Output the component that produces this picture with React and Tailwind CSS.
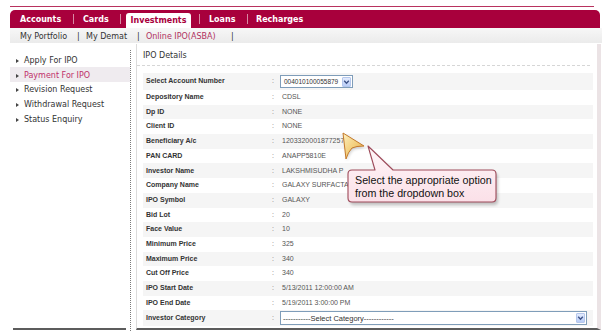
import React from "react";

const rows = [
  ["Depository Name", "CDSL"],
  ["Dp ID", "NONE"],
  ["Client ID", "NONE"],
  ["Beneficiary A/c", "1203320001877257"],
  ["PAN CARD", "ANAPP5810E"],
  ["Investor Name", "LAKSHMISUDHA P"],
  ["Company Name", "GALAXY SURFACTANTS LTD"],
  ["IPO Symbol", "GALAXY"],
  ["Bid Lot", "20"],
  ["Face Value", "10"],
  ["Minimum Price", "325"],
  ["Maximum Price", "340"],
  ["Cut Off Price", "340"],
  ["IPO Start Date", "5/13/2011 12:00:00 AM"],
  ["IPO End Date", "5/19/2011 3:00:00 PM"],
];

const side = [
  "Apply For IPO",
  "Payment For IPO",
  "Revision Request",
  "Withdrawal Request",
  "Status Enquiry",
];

function Chevron() {
  return (
    <div className="w-[9px] h-[10px] mr-px bg-gradient-to-b from-[#e3ebfd] to-[#b9cdf7] border border-[#b5c7ec] rounded-[1px] flex items-center justify-center">
      <svg width="7" height="6" viewBox="0 0 7 6">
        <path d="M1.2 1.8 L3.5 4.2 L5.8 1.8" fill="none" stroke="#3d5287" strokeWidth="1.4" />
      </svg>
    </div>
  );
}

function Label({ children }) {
  return (
    <div className="w-[129px] pl-[3px] text-[7px] font-bold text-[#333] whitespace-nowrap">{children}</div>
  );
}

function Colon() {
  return <div className="w-[10px] text-[7px] text-[#777]">:</div>;
}

export default function App() {
  return (
    <div className="w-[605px] h-[331px] relative overflow-hidden bg-white" style={{ fontFamily: "'DejaVu Sans', sans-serif" }}>
      {/* top thin line */}
      <div className="ml-[10px] mr-[11px] mt-[6px] h-px bg-[#b8325e]" />
      {/* red tab bar */}
      <div className="ml-[10px] mr-[5px] mt-[3px] h-[18px] bg-[#a8003c] rounded-t-[5px] flex items-center text-[8px] font-bold text-white whitespace-nowrap">
        <div className="w-[63px] pl-[10px] pt-[1.5px]">Accounts</div>
        <div className="w-px h-[10px] bg-[#d88aa4]" />
        <div className="w-[46px] pl-[9px] pt-[1.5px]">Cards</div>
        <div className="w-px h-[10px] bg-[#d88aa4]" />
        <div className="w-[5px]" />
        <div className="self-end w-[65px] h-[15px] bg-white rounded-t-[3px] text-[#a8003c] flex items-center justify-center">Investments</div>
        <div className="w-[8px]" />
        <div className="w-px h-[10px] bg-[#d88aa4]" />
        <div className="w-[47px] pl-[9px] pt-[1.5px]">Loans</div>
        <div className="w-px h-[10px] bg-[#d88aa4]" />
        <div className="pl-[8px] pt-[1.5px]">Recharges</div>
      </div>
      {/* sub nav */}
      <div className="ml-[10px] mr-[3px] h-[15px] pt-[2px] bg-gradient-to-b from-[#f7f7f7] to-[#ebebeb] flex items-center text-[8px] text-[#333] whitespace-nowrap">
        <div className="w-[67px] pl-[10px]">My Portfolio</div>
        <div className="w-[9px]">|</div>
        <div className="w-[51px]">My Demat</div>
        <div className="w-[9px]">|</div>
        <div className="w-[85px] text-[#b03060]">Online IPO(ASBA)</div>
        <div>|</div>
      </div>
      {/* body */}
      <div className="flex h-[288px]">
        {/* sidebar */}
        <div className="ml-[10px] w-[119px] flex flex-col">
          <div className="pt-[9.4px] flex flex-col">
            {side.map((s, i) => (
              <div
                key={s}
                className={
                  "h-[14.8px] pt-[2px] flex items-center pl-[6px] text-[8px] whitespace-nowrap " +
                  (i === 1 ? "bg-[#efebef] text-[#c0306a] mr-[-1px]" : "text-[#333]")
                }
              >
                <div className="w-[8px] flex items-center">
                  <div className="w-0 h-0 border-y-[2px] border-y-transparent border-l-[3px] border-l-[#444]" />
                </div>
                {s}
              </div>
            ))}
          </div>
          <div className="mt-auto mx-[3px] mb-[1.5px] h-[2px] bg-[#5c5c5c]" />
        </div>
        {/* dotted divider */}
        <div className="mt-[7px] ml-[1px] w-px border-l border-dotted border-[#7a7a7a]" />
        {/* main panel */}
        <div className="ml-[5px] mt-[1px] mb-[1.5px] w-[465px] border-l border-[#dcdcdc] border-r-[4px] border-r-[#ebe3e5] border-b-2 border-b-[#5c5c5c] flex flex-col">
          <div className="h-[22px] pl-[6px] pt-[2px] mr-[7px] flex items-center text-[8px] text-[#333] border-b border-dashed border-[#d6d6d6]">
            IPO Details
          </div>
          <div className="mt-[7px] ml-[6px] mr-[4px] flex flex-col" style={{ fontFamily: "'Liberation Sans', Arial, sans-serif" }}>
            <div className="h-[17px] flex items-center bg-[#f5f5f5]">
              <Label>Select Account Number</Label>
              <Colon />
              <div className="ml-[-2px] w-[73px] h-[13px] border border-[#7f9db9] bg-white flex items-center justify-between">
                <span className="pl-[3px] text-[6.5px] text-[#333]">004010100055879</span>
                <Chevron />
              </div>
            </div>
            {rows.map(([l, v], i) => (
              <div key={l} className={"h-[14.7px] flex items-center " + (i % 2 === 1 ? "bg-[#f5f5f5]" : "")}>
                <Label>{l}</Label>
                <Colon />
                <div className="text-[7px] text-[#555] whitespace-nowrap">{v}</div>
              </div>
            ))}
            <div className="h-[16px] flex items-center bg-[#f5f5f5]">
              <Label>Investor Category</Label>
              <Colon />
              <div className="ml-[-2px] w-[307px] h-[14px] border border-[#7f9db9] bg-white flex items-center justify-between">
                <span className="pl-[2px] text-[7.5px] text-[#333] whitespace-nowrap">-----------Select Category------------</span>
                <Chevron />
              </div>
            </div>
          </div>
        </div>
      </div>

      {/* overlay: cursor arrow and callout */}
      <svg className="absolute left-0 top-0 pointer-events-none" width="605" height="331" viewBox="0 0 605 331">
        <defs>
          <linearGradient id="ar" x1="0" y1="0" x2="1" y2="1">
            <stop offset="0" stopColor="#fdf0c0" />
            <stop offset="0.5" stopColor="#f3cf7c" />
            <stop offset="1" stopColor="#e2a54a" />
          </linearGradient>
          <linearGradient id="cb" x1="0" y1="0" x2="0" y2="1">
            <stop offset="0" stopColor="#fff6f8" />
            <stop offset="1" stopColor="#fbe0e8" />
          </linearGradient>
          <filter id="sh" x="-10%" y="-10%" width="130%" height="140%">
            <feGaussianBlur stdDeviation="1.5" />
          </filter>
        </defs>
        <path d="M344 135 L365 148 Q357 148 353 150 Q349 154 347 161 Z" fill="#000" opacity="0.18" filter="url(#sh)" />
        <path d="M343 133 L364 146 Q356 146 352 148 Q348 152 346 159 Z" fill="url(#ar)" stroke="#c47a2c" strokeWidth="1" strokeLinejoin="round" />
        <path
          d="M354 173 L377 173 L370 149 L395 173 L494 173 Q498 173 498 177 L498 201 Q498 205 494 205 L354 205 Q350 205 350 201 L350 177 Q350 173 354 173 Z"
          fill="#000"
          opacity="0.22"
          filter="url(#sh)"
        />
        <path
          d="M352 170 L375 170 L368 146 L393 170 L492 170 Q496 170 496 174 L496 198 Q496 202 492 202 L352 202 Q348 202 348 198 L348 174 Q348 170 352 170 Z"
          fill="url(#cb)"
          stroke="#9e4a5a"
          strokeWidth="1.1"
          strokeLinejoin="round"
        />
      </svg>
      <div
        className="absolute left-[355px] top-[174.4px] text-[10.7px] leading-[12.6px] text-[#111] whitespace-nowrap"
        style={{ fontFamily: "'Liberation Sans', Arial, sans-serif" }}
      >
        Select the appropriate option
        <br />
        from the dropdown box
      </div>
    </div>
  );
}
